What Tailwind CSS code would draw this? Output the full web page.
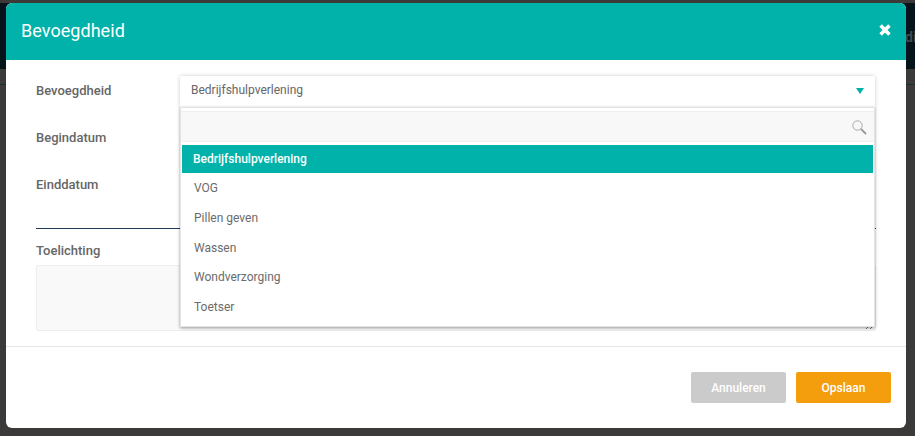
<!DOCTYPE html>
<html>
<head>
<meta charset="utf-8">
<script src="https://cdn.jsdelivr.net/npm/@tailwindcss/browser@4"></script>
</head>
<body class="w-[915px] h-[436px] overflow-hidden bg-[#3b3a39] font-['Roboto',sans-serif]">
<div class="relative w-[915px] h-[436px] pt-[3px] pl-[6px]">
  <div class="absolute left-0 right-0 top-[3px] h-[66px] bg-[#04141a]"></div>
  <div class="absolute left-0 right-0 top-[84px] h-px bg-[#16332f]"></div>
  <div class="absolute left-[905px] top-[27px] text-[14px] font-bold text-[#3f4a4d]">di</div>
  <div class="relative w-[900px] h-[425px] bg-white rounded-[6px] overflow-hidden flex flex-col">
    <div class="h-[57px] shrink-0 bg-[#00b2a9] flex items-center justify-between pb-[3px] pl-[15px] pr-[15px] text-white">
      <span class="text-[18px] tracking-[0.05px]">Bevoegdheid</span>
      <svg width="12" height="12" viewBox="0 0 12 12"><path d="M1.6 1.6 L10.4 10.4 M10.4 1.6 L1.6 10.4" stroke="#fff" stroke-width="3.6"/></svg>
    </div>
    <div class="relative h-[287px] shrink-0 border-b border-[#e5e5e5] pl-[30px] pr-[30px]">
      <div class="flex flex-col text-[13px] font-medium text-[#666]">
        <div class="h-[47px] pt-[22px] leading-[17px]">Bevoegdheid</div>
        <div class="h-[47px] pt-[22px] leading-[17px]">Begindatum</div>
        <div class="h-[75px] pt-[22px] leading-[17px] border-b border-[#1f3a55]">Einddatum</div>
        <div class="h-[36px] pt-[13px] leading-[17px]">Toelichting</div>
      </div>
      <div class="relative h-[66px] w-[840px] bg-[#f9f9f9] border border-[#eee] rounded-[2px]">
        <svg class="absolute right-[2px] bottom-[0px]" width="7" height="5" viewBox="0 0 7 5" fill="none"><path d="M0 4L2 2M4 4L6 2" stroke="#777" stroke-width="1"/></svg>
      </div>

      <div class="absolute left-[174px] top-[16px] w-[695px] h-[32px] bg-white rounded-[2px] shadow-[0_0_4px_rgba(0,0,0,0.2)] flex items-center justify-between pb-[5px] pl-[11px] pr-[11px] text-[12px] text-[#666]">
        <span>Bedrijfshulpverlening</span>
        <svg class="mt-[2px]" width="8" height="6" viewBox="0 0 8 6"><path d="M0 0H8L4 6Z" fill="#00b2a9"/></svg>
      </div>
      <div class="absolute left-[174px] top-[47px] w-[695px] h-[220px] bg-white border border-[#e4e4e4] shadow-[0_1px_3px_rgba(0,0,0,0.4)] pt-[3px] pb-0 text-[12px] text-[#6b6b6b]">
        <div class="h-[31px] bg-[#f8f8f8] border-y border-[#eee] flex items-center justify-end pr-[7px]">
          <svg width="16" height="16" viewBox="0 0 16 16" fill="none"><circle cx="6.5" cy="6.5" r="4.7" stroke="#aaa" stroke-width="1"/><path d="M10 10L15 15" stroke="#999" stroke-width="1.8"/></svg>
        </div>
        <div class="h-[28px] mt-[3px] ml-px mr-px bg-[#00b2a9] text-white font-medium flex items-center pl-[11px]">Bedrijfshulpverlening</div>
        <div class="h-[30px] flex items-center pl-[13px]">VOG</div>
        <div class="h-[30px] flex items-center pl-[13px]">Pillen geven</div>
        <div class="h-[29px] flex items-center pl-[13px]">Wassen</div>
        <div class="h-[30px] flex items-center pl-[13px]">Wondverzorging</div>
        <div class="h-[30px] flex items-center pl-[13px]">Toetser</div>
      </div>
    </div>
    <div class="flex-1 flex items-start justify-end gap-[10px] pt-[25px] pr-[15px]">
      <button class="w-[95px] h-[31px] rounded-[2px] bg-[#cbcbcb] text-white text-[12px] font-medium">Annuleren</button>
      <button class="w-[95px] h-[31px] rounded-[2px] bg-[#f49e0e] text-white text-[12px] font-medium">Opslaan</button>
    </div>
  </div>
</div>
</body>
</html>
